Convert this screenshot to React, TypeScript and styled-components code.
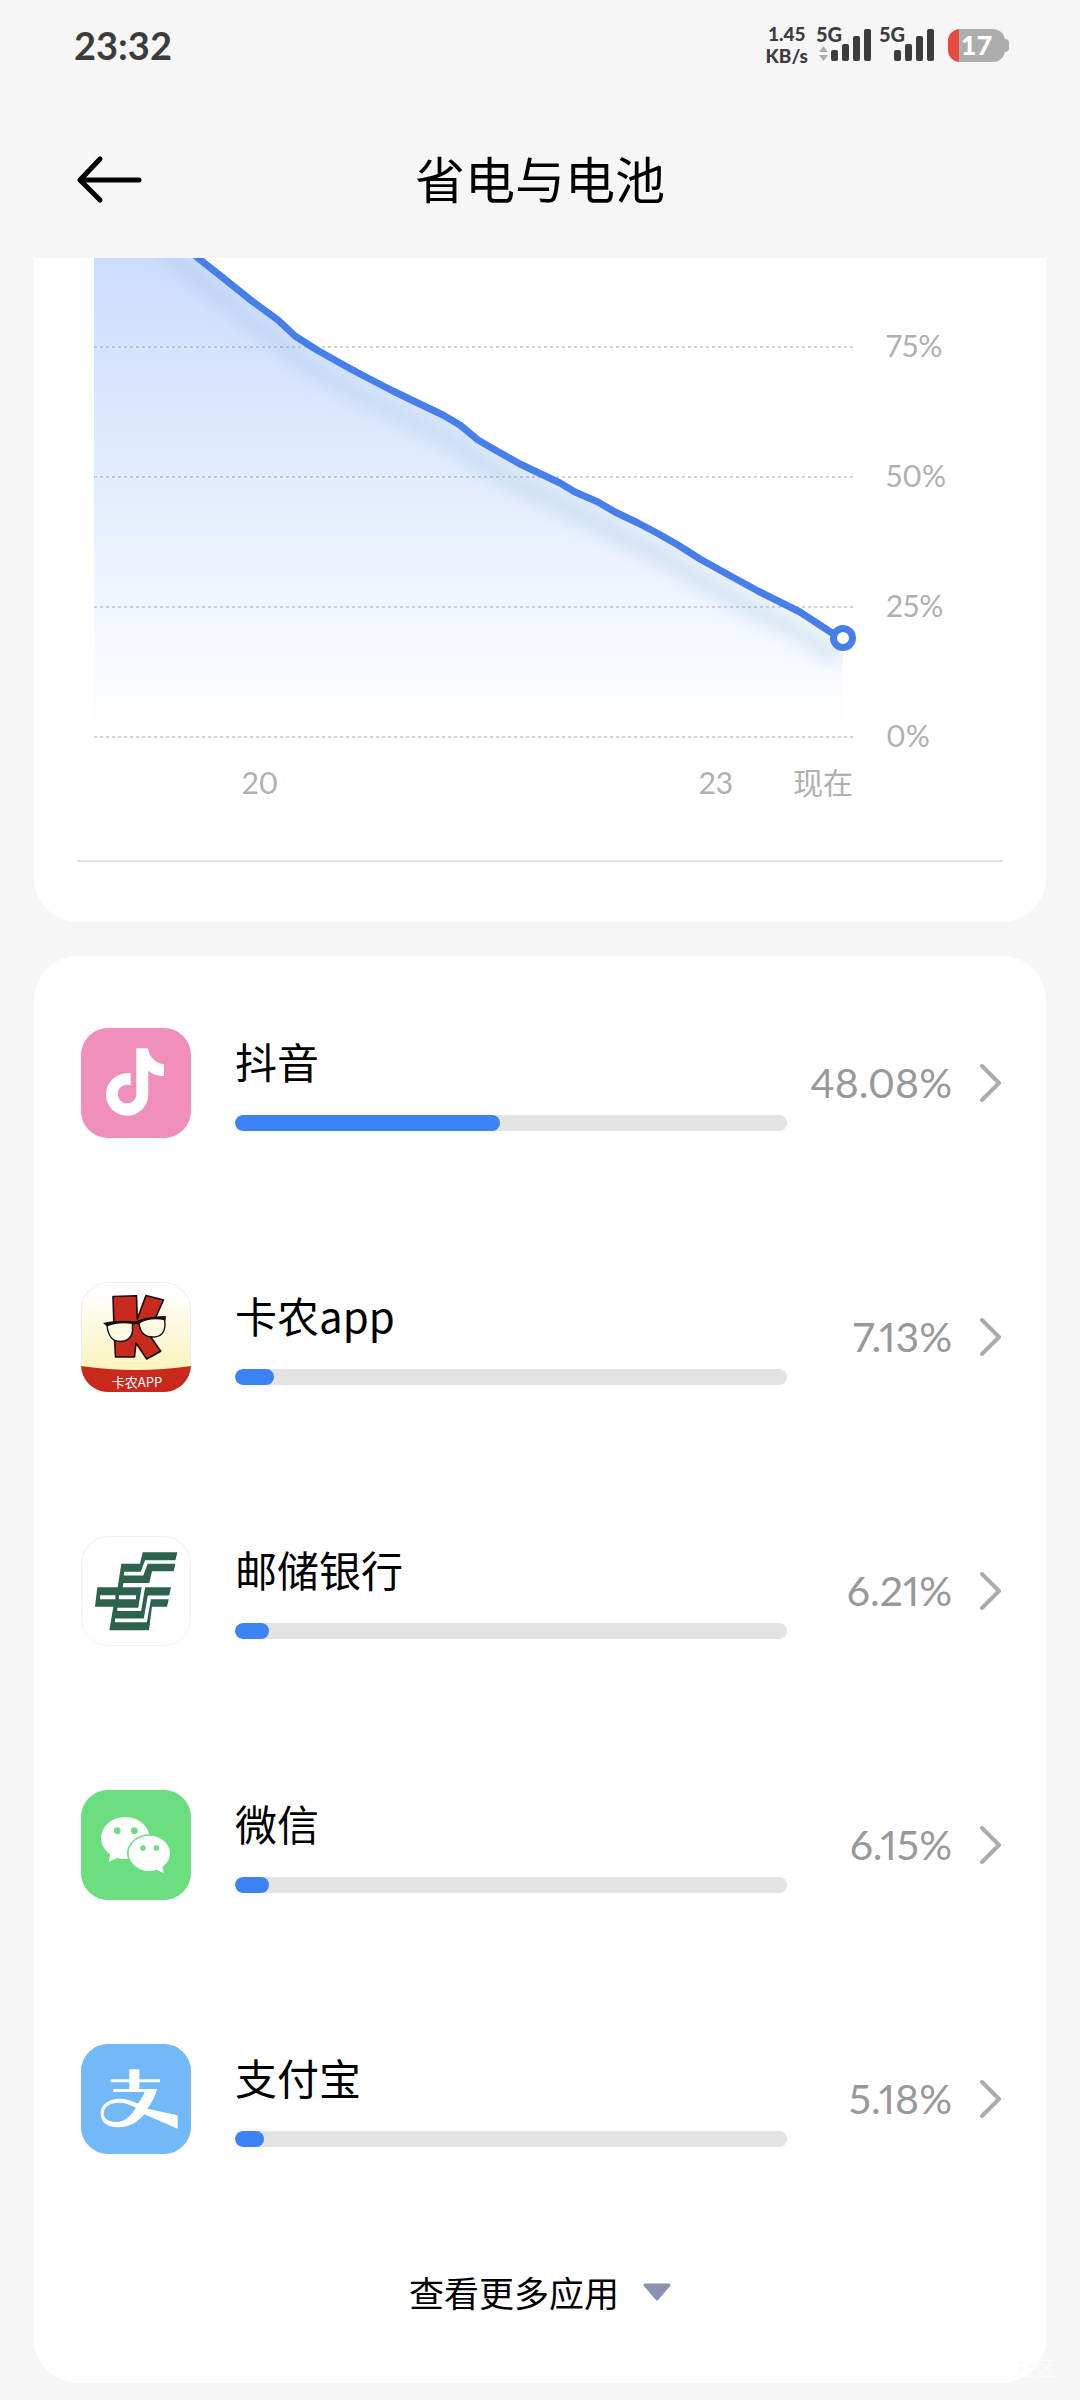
import React from 'react';
import styled, { createGlobalStyle } from 'styled-components';

const GlobalStyle = createGlobalStyle`
  *, *::before, *::after { box-sizing: border-box; }
  body {
    margin: 0;
    background: #f6f6f6;
    color: #000;
    font-family: Lato, 'Noto Sans CJK SC', sans-serif;
  }
  button { font: inherit; color: inherit; background: none; border: 0; padding: 0; cursor: pointer; }
`;

const Page = styled.div`
  position: relative;
  min-height: 100vh;
  background: #f6f6f6;
  padding-bottom: 17px;
`;

const Watermark = styled.span`
  position: absolute;
  right: 24px;
  bottom: 20px;
  color: #fbfbfb;
  font-size: 20px;
  line-height: 24px;
`;

/* ---------- status bar ---------- */

const StatusBar = styled.div`
  display: flex;
  align-items: center;
  justify-content: space-between;
  height: 90px;
  padding: 0 71px 0 74px;
  color: #3c3c3c;
`;

const Clock = styled.time`
  font-size: 38px;
  line-height: 48px;
  font-weight: 700;
`;

const StatusIcons = styled.div`
  display: flex;
  align-items: center;
  gap: 8px;
`;

const NetSpeed = styled.div`
  display: flex;
  flex-direction: column;
  align-items: center;
  font-size: 19px;
  line-height: 22px;
  font-weight: 900;
`;

const Signal = styled.div`
  display: flex;
  align-items: flex-start;
  height: 34px;
`;

const NetType = styled.div`
  display: flex;
  flex-direction: column;
  align-items: center;
  gap: 6px;
  width: 15px;
  font-size: 20px;
  line-height: 12px;
  font-weight: 900;
  white-space: nowrap;

  span { align-self: flex-start; }
`;

const Battery = styled.div`
  display: flex;
  align-items: center;
  margin-left: 6px;
`;

const BatteryBody = styled.div`
  width: 57px;
  height: 33px;
  border-radius: 12px;
  background: linear-gradient(90deg, #e64b3c 11px, #adadad 11px);
  color: #fff;
  font-size: 27px;
  line-height: 32px;
  font-weight: 900;
  text-align: center;
`;

const BatteryCap = styled.div`
  width: 4px;
  height: 13px;
  border-radius: 0 5px 5px 0;
  background: #adadad;
`;

/* ---------- title bar ---------- */

const TitleBar = styled.header`
  display: grid;
  grid-template-columns: 68px 1fr 68px;
  align-items: center;
  height: 168px;
  padding: 12px 76px 0;
`;

const BackButton = styled.button`
  display: flex;
`;

const Title = styled.h1`
  margin: 0;
  font-size: 50px;
  line-height: 64px;
  font-weight: 400;
  text-align: center;
`;

/* ---------- cards ---------- */

const Main = styled.main`
  display: flex;
  flex-direction: column;
  gap: 34px;
  padding: 0 34px;
`;

const ChartCard = styled.section`
  background: #fff;
  border-radius: 0 0 44px 44px;
  padding: 0 43px 60px;
`;

const ChartGrid = styled.div`
  display: grid;
  grid-template-columns: 1fr 117px;
  column-gap: 33px;
  padding: 0 0 34px 17px;
  color: #b0b0b0;
  font-size: 30px;
  font-variant-numeric: proportional-nums;
`;

const Plot = styled.svg`
  display: block;
  width: 100%;
  height: 480px;
`;

const YAxis = styled.div`
  grid-column: 2;
  grid-row: 1 / span 2;
  padding-top: 22px;
  line-height: 130px;
  height: 568px;
`;

const XAxis = styled.div`
  display: grid;
  grid-template-columns: 332fr 248fr 84fr 95fr;
  line-height: 88px;
  text-align: center;
  white-space: nowrap;

  span:nth-child(2) { grid-column: 3; }
  span:nth-child(3) { text-align: right; }
`;

const Divider = styled.hr`
  height: 2px;
  margin: 0;
  border: 0;
  background: #e0e0e0;
`;

const AppCard = styled.section`
  background: #fff;
  border-radius: 44px;
`;

const AppList = styled.ul`
  margin: 0;
  padding: 0;
  list-style: none;
`;

const AppRow = styled.button`
  display: flex;
  align-items: center;
  width: 100%;
  height: 254px;
  padding: 0 44px 0 47px;
  text-align: left;
`;

const IconTile = styled.svg`
  flex: none;
  width: 110px;
  height: 110px;
  border-radius: 27px;
`;

const Usage = styled.span`
  flex: 1;
  display: flex;
  flex-direction: column;
  gap: 30px;
  padding-top: 2px;
  margin-left: 44px;
`;

const AppName = styled.span`
  font-family: 'Noto Sans CJK SC', sans-serif;
  font-size: 42px;
  line-height: 48px;
`;

const Track = styled.span`
  display: block;
  height: 16px;
  border-radius: 8px;
  background: #e3e3e3;
  overflow: hidden;
`;

const Fill = styled.span`
  display: block;
  height: 100%;
  border-radius: 8px;
  background: #3b82f4;
`;

const Percent = styled.span`
  width: 165px;
  color: #999;
  font-size: 41px;
  line-height: 52px;
  font-variant-numeric: proportional-nums;
  text-align: right;
`;

const Chevron = styled.svg`
  flex: none;
  margin-left: 28px;
`;

const MoreButton = styled.button`
  display: flex;
  align-items: center;
  justify-content: center;
  gap: 24px;
  width: 100%;
  height: 157px;
  padding-bottom: 26px;
  font-family: 'Noto Sans CJK SC', sans-serif;
  font-size: 35px;
`;

/* ---------- icons ---------- */

const SignalBars = () => (
  <svg width="40" height="34" viewBox="0 0 40 34" fill="#3c3c3c" aria-hidden="true">
    <rect x="0" y="22" width="7" height="11" rx="2" />
    <rect x="11" y="16" width="7" height="17" rx="2" />
    <rect x="22" y="8" width="7" height="25" rx="2" />
    <rect x="33" y="1" width="7" height="32" rx="2" />
  </svg>
);

const DouyinIcon = () => (
  <IconTile viewBox="0 0 110 110" aria-hidden="true">
    <rect width="110" height="110" fill="#f08fba" />
    <path
      fill="#fff"
      d="M55.3 20.3H67C68 29 75 36 83 36V48C77 48 71 46 67.3 42.7V66.7A21.2 21.2 0 1 1 46 45.3Q48 45 49.7 45.3V57.5A9.3 9.3 0 1 0 55.3 66.7Z"
    />
  </IconTile>
);

const KanongIcon = () => (
  <IconTile viewBox="0 0 110 110" aria-hidden="true">
    <defs>
      <linearGradient id="cream" x1="0" y1="0" x2="0" y2="1">
        <stop offset="0.1" stopColor="#fffefd" />
        <stop offset="0.8" stopColor="#fbf3bd" />
      </linearGradient>
    </defs>
    <rect width="110" height="110" fill="url(#cream)" />
    <rect x="0.5" y="0.5" width="109" height="109" rx="27" fill="none" stroke="#ececec" />
    <path d="M0 84Q55 92 110 84V110H0Z" fill="#c9281d" />
    <path
      d="M32 14.5L55.5 13.7L56.3 37L65 13.5L82.5 18L74 37L67 51L79.7 69.3L65.7 77L55 61L53.5 75H34.5L33 45Z"
      fill="#ca2a1e"
      stroke="#150a08"
      strokeWidth="1.6"
      strokeLinejoin="round"
    />
    <path d="M26 43C34 40 44 39 51.5 40.5L51.5 49C50.5 56 46 59.5 39 59.5C31 59.5 27 54 26 43Z" fill="#fdf9e2" stroke="#111" strokeWidth="1.4" />
    <path d="M58 40C66 36 75 35 83.500 36L84 43C83.500 51 79 55 72 55C63 55 58.500 50 58 40Z" fill="#fdf9e2" stroke="#111" strokeWidth="1.4" />
    <path d="M22 41C32 38.500 44 38 54 39.500L58 38C67 35 76 34 85 34L84.500 38.500C75 36.500 66 37 59.500 41L57 42.500L51 42C42 40.500 34 41.500 26 44.500Z" fill="#111" />
    <text x="56" y="105" fill="#fff" fontSize="13" textAnchor="middle" fontFamily="'Noto Sans CJK SC', sans-serif">
      卡农APP
    </text>
  </IconTile>
);

const PostBankIcon = () => (
  <IconTile viewBox="63 77 330 330" aria-hidden="true">
    <rect x="63" y="77" width="330" height="330" fill="#fff" />
    <rect x="65" y="79" width="326" height="326" rx="79" fill="none" stroke="#efefef" strokeWidth="3" />
    <path
      fill="#2d634b"
      d="M248 126H352L347 148H345V162H346L341 183H276L268 218H190L188 231H333L328 254H326V268L321 289H276L267 360H148L160 289H105L112 231H173L184 160H240Z"
    />
    <g fill="none" stroke="#fff" strokeWidth="11">
      <path d="M192 190H246L259 155H360" />
      <path d="M120 261H166M177 261H228" strokeWidth="12" />
      <path d="M172 297H239L251 226" strokeWidth="10" />
      <path d="M165 330H256L268 261H345" />
    </g>
  </IconTile>
);

const WeChatIcon = () => (
  <IconTile viewBox="63 840 330 330" aria-hidden="true">
    <rect x="63" y="840" width="330" height="330" fill="#6bdf7f" />
    <path d="M152 1028L146 1056L176 1042Z" fill="#fff" />
    <ellipse cx="196" cy="984" rx="73" ry="63" fill="#fff" />
    <ellipse cx="267" cy="1030" rx="66" ry="57" fill="#6bdf7f" />
    <ellipse cx="268" cy="1030" rx="62" ry="53" fill="#fff" />
    <path d="M286 1078L311 1090L306 1066Z" fill="#fff" />
    <g fill="#6bdf7f">
      <circle cx="172" cy="962" r="10" />
      <circle cx="223" cy="962" r="10" />
      <circle cx="249" cy="1014" r="8" />
      <circle cx="289" cy="1014" r="8" />
    </g>
  </IconTile>
);

const AlipayIcon = () => (
  <IconTile viewBox="63 72 330 330" aria-hidden="true">
    <rect x="63" y="72" width="330" height="330" fill="#73b8f9" />
    <path
      fill="#fff"
      fillRule="evenodd"
      d="M208 148H238V178H300V187H238V207H292C284 232 274 250 262 266L353 286V326L253 283C235 305 210 322 175 322C142 322 122 308 122 280C122 252 148 236 180 236C202 237 218 243 234 251C242 240 250 228 254 216H160V207H208V187H152V178H208ZM228 263C210 254 196 248 178 248C150 248 132 260 131 280C131 296 144 306 168 306C194 306 212 288 228 263Z"
    />
  </IconTile>
);

/* ---------- data ---------- */

const apps = [
  { name: '抖音', percent: 48.08, Icon: DouyinIcon },
  { name: '卡农app', percent: 7.13, Icon: KanongIcon },
  { name: '邮储银行', percent: 6.21, Icon: PostBankIcon },
  { name: '微信', percent: 6.15, Icon: WeChatIcon },
  { name: '支付宝', percent: 5.18, Icon: AlipayIcon },
];

const level = [
  [70, -30], [104, 0], [128, 19], [158, 43], [184, 62], [201, 78], [223, 92], [246, 105], [268, 117],
  [299, 133], [328, 147], [349, 157], [366, 167], [384, 182], [403, 193], [426, 206], [466, 225],
  [481, 234], [504, 244], [521, 254], [544, 265], [563, 275], [584, 287], [606, 301], [633, 316],
  [664, 333], [706, 354], [738, 375], [749, 380],
];

const line = 'M' + level.map((p) => p.join(' ')).join('L');
const area = `M0 -30L${level.map((p) => p.join(' ')).join('L')}V479H0Z`;

const BatteryChart = () => (
  <Plot viewBox="0 0 759 480" preserveAspectRatio="none" role="img" aria-label="电池电量">
    <defs>
      <linearGradient id="fade" gradientUnits="userSpaceOnUse" x1="0" y1="0" x2="0" y2="479">
        <stop offset="0" stopColor="#ccdcfd" />
        <stop offset="0.5" stopColor="#e5eefe" />
        <stop offset="0.78" stopColor="#f5f8ff" />
        <stop offset="1" stopColor="#fff" />
      </linearGradient>
      <clipPath id="under"><path d={area} /></clipPath>
      <filter id="soft" x="-10%" y="-10%" width="120%" height="120%"><feGaussianBlur stdDeviation="8" /></filter>
    </defs>
    <path d={area} fill="url(#fade)" />
    <g clipPath="url(#under)">
      <path d={line} transform="translate(-2 20)" fill="none" stroke="#9cc4e0" strokeOpacity="0.32" strokeWidth="18" filter="url(#soft)" />
    </g>
    {[89, 219, 349, 479].map((y) => (
      <line key={y} x1="0" x2="759" y1={y} y2={y} stroke="#8c96a0" strokeOpacity="0.4" strokeWidth="2" strokeDasharray="3 3" />
    ))}
    <path d={line} fill="none" stroke="#467eea" strokeWidth="7" strokeLinejoin="round" />
  </Plot>
);

const PlotArea = styled.div`
  position: relative;
`;

/* Ring over the last sample of the curve; it may reach past the plot's right edge. */
const NowMarker = styled.span`
  position: absolute;
  width: 26px;
  height: 26px;
  border: 7px solid #467eea;
  border-radius: 50%;
  background: #fff;
  transform: translate(-50%, -50%);
`;

const [nowX, nowY] = level[level.length - 1];

export default function App() {
  return (
    <Page>
      <GlobalStyle />
      <StatusBar>
        <Clock>23:32</Clock>
        <StatusIcons>
          <NetSpeed>
            <span>1.45</span>
            <span>KB/s</span>
          </NetSpeed>
          <Signal>
            <NetType>
              <span>5G</span>
              <svg width="9" height="15" viewBox="0 0 9 15" fill="#adadad" aria-hidden="true">
                <path d="M4.500 0L9 6H0ZM0 9H9L4.500 15Z" />
              </svg>
            </NetType>
            <SignalBars />
          </Signal>
          <Signal>
            <NetType>
              <span>5G</span>
            </NetType>
            <SignalBars />
          </Signal>
          <Battery>
            <BatteryBody>17</BatteryBody>
            <BatteryCap />
          </Battery>
        </StatusIcons>
      </StatusBar>

      <TitleBar>
        <BackButton type="button" aria-label="返回">
          <svg width="68" height="50" viewBox="0 0 68 50" fill="none" stroke="#000" strokeWidth="5" strokeLinecap="round" strokeLinejoin="round">
            <path d="M63 25H4M24 4L4 25L24 45" />
          </svg>
        </BackButton>
        <Title>省电与电池</Title>
      </TitleBar>

      <Main>
        <ChartCard>
          <ChartGrid>
            <PlotArea>
              <BatteryChart />
              <NowMarker style={{ left: `${(nowX / 759) * 100}%`, top: `${(nowY / 480) * 100}%` }} />
            </PlotArea>
            <YAxis>
              <div>75%</div>
              <div>50%</div>
              <div>25%</div>
              <div>0%</div>
            </YAxis>
            <XAxis>
              <span>20</span>
              <span>23</span>
              <span>现在</span>
            </XAxis>
          </ChartGrid>
          <Divider />
        </ChartCard>

        <AppCard>
          <AppList>
            {apps.map(({ name, percent, Icon }) => (
              <li key={name}>
                <AppRow type="button">
                  <Icon />
                  <Usage>
                    <AppName>{name}</AppName>
                    <Track>
                      <Fill style={{ width: `${percent}%` }} />
                    </Track>
                  </Usage>
                  <Percent>{percent.toFixed(2)}%</Percent>
                  <Chevron width="22" height="38" viewBox="0 0 22 38" fill="none" stroke="#acacac" strokeWidth="4" strokeLinecap="round" strokeLinejoin="round" aria-hidden="true">
                    <path d="M2 2L19 19L2 36" />
                  </Chevron>
                </AppRow>
              </li>
            ))}
          </AppList>
          <MoreButton type="button">
            查看更多应用
            <svg width="28" height="18" viewBox="0 0 28 18" fill="#8b91b3" stroke="#8b91b3" strokeWidth="3" strokeLinejoin="round" aria-hidden="true">
              <path d="M2 2H26L14 16Z" />
            </svg>
          </MoreButton>
        </AppCard>
      </Main>
      <Watermark aria-hidden="true">社区</Watermark>
    </Page>
  );
}
